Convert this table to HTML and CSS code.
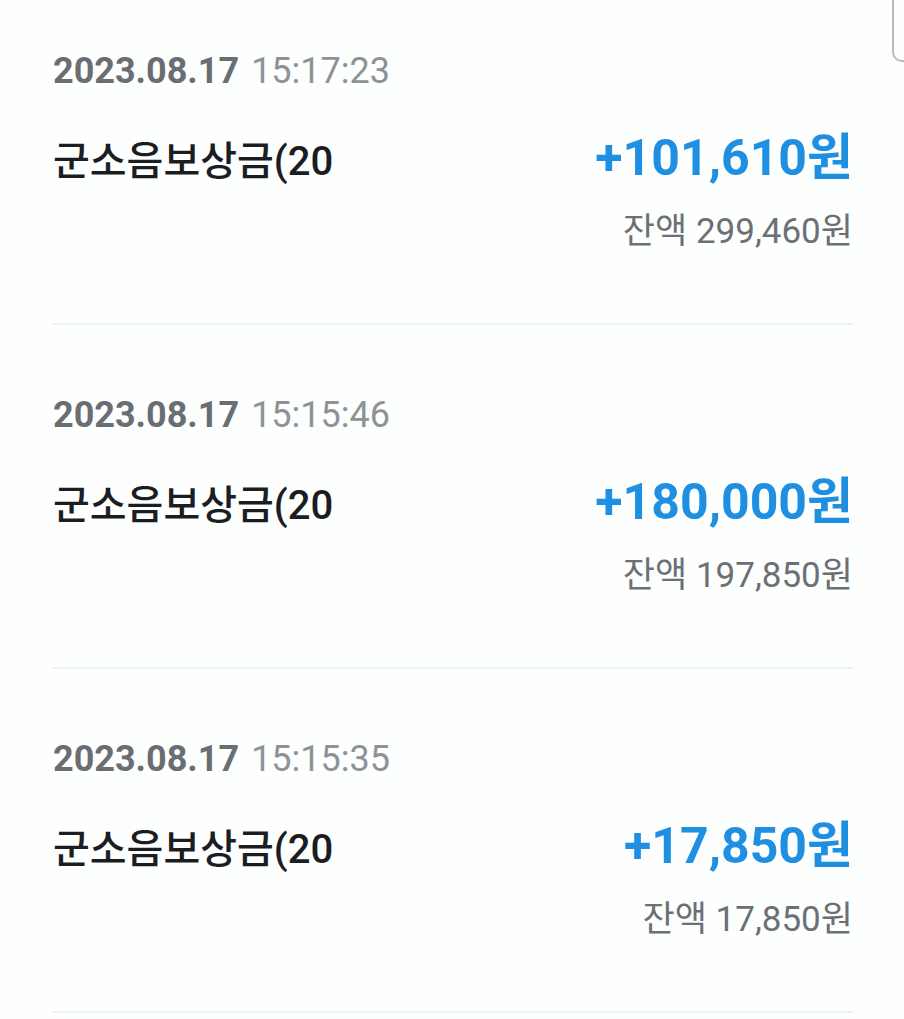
FILE: index.html
```html
<!DOCTYPE html>
<html lang="ko">
<head>
<meta charset="utf-8">
<link rel="stylesheet" href="styles.css">
</head>
<body>
<div class="scroll-edge"></div>
<div class="list">
  <div class="item">
    <div class="when"><span class="date">2023.08.17</span> <span class="time">15:17:23</span></div>
    <div class="row">
      <div class="title">군소음보상금(20</div>
      <div class="amount">+101,610원</div>
    </div>
    <div class="balance">잔액 299,460원</div>
  </div>
  <div class="item">
    <div class="when"><span class="date">2023.08.17</span> <span class="time">15:15:46</span></div>
    <div class="row">
      <div class="title">군소음보상금(20</div>
      <div class="amount">+180,000원</div>
    </div>
    <div class="balance">잔액 197,850원</div>
  </div>
  <div class="item">
    <div class="when"><span class="date">2023.08.17</span> <span class="time">15:15:35</span></div>
    <div class="row">
      <div class="title">군소음보상금(20</div>
      <div class="amount">+17,850원</div>
    </div>
    <div class="balance">잔액 17,850원</div>
  </div>
</div>
</body>
</html>
```
FILE: styles.css
```css
html, body {
  margin: 0;
  padding: 0;
  background: #fdfefe;
  overflow: hidden;
}
body {
  font-family: Roboto, "Noto Sans CJK KR", sans-serif;
  width: 904px;
  height: 1019px;
  position: relative;
}
.scroll-edge {
  position: absolute;
  top: -10px;
  left: 892px;
  width: 30px;
  height: 72px;
  border: 2px solid #b9bbbd;
  border-radius: 10px;
  box-sizing: border-box;
}
.list {
  margin-top: -19px;
  padding: 0 51px 0 53px;
}
.item {
  padding-top: 66px;
  height: 276px;
  border-bottom: 2px solid #eef1f3;
}
.when {
  font-size: 36px;
  line-height: 48px;
  display: flex;
  gap: 12px;
}
.date {
  font-weight: 700;
  color: #6a6e73;
}
.time {
  color: #8e9297;
}
.row {
  display: flex;
  justify-content: space-between;
  align-items: baseline;
  margin-top: 33px;
}
.title {
  font-size: 40px;
  line-height: 60px;
  color: #1b1d21;
  font-weight: 500;
}
.amount {
  font-size: 50px;
  line-height: 60px;
  font-weight: 700;
  color: #1f8fe2;
}
.balance {
  text-align: right;
  font-size: 35px;
  line-height: 48px;
  color: #6c7075;
  margin-top: 16px;
}
```
